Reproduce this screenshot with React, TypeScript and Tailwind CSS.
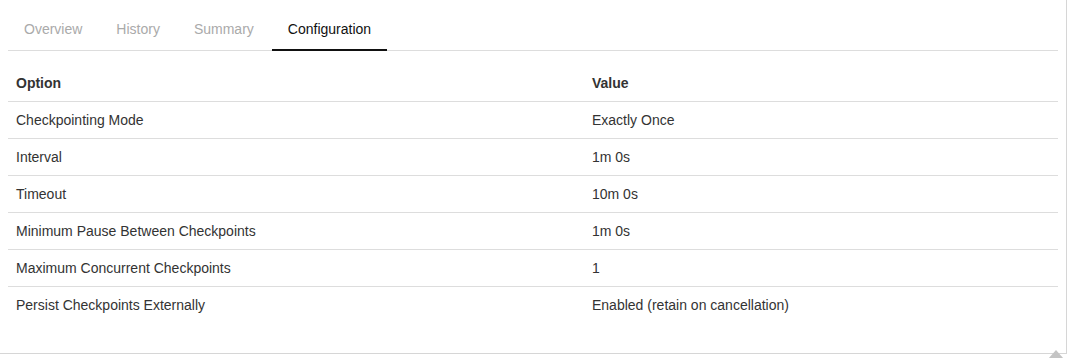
import React from 'react';

const tabs = ['Overview', 'History', 'Summary', 'Configuration'];

const rows: [string, string][] = [
  ['Checkpointing Mode', 'Exactly Once'],
  ['Interval', '1m 0s'],
  ['Timeout', '10m 0s'],
  ['Minimum Pause Between Checkpoints', '1m 0s'],
  ['Maximum Concurrent Checkpoints', '1'],
  ['Persist Checkpoints Externally', 'Enabled (retain on cancellation)'],
];

const App = () => {
  const active = 'Configuration';

  return (
    <div className="relative w-[1072px] h-[358px] bg-white overflow-hidden font-['Liberation_Sans',Arial,sans-serif] text-[14px] leading-5 text-[#333]">
      <div className="w-[1067px] h-[354px] bg-white border-r border-b border-[#d6d6d6] px-2 pt-2">
        <ul className="flex gap-[2px] border-b border-[#dddddd]">
          {tabs.map((tab) => (
            <li
              key={tab}
              className={`px-4 pt-[11px] pb-[10px] -mb-px border-b-2 ${
                tab === active ? 'border-[#111] text-[#111]' : 'border-transparent text-[#aaaaaa]'
              }`}
            >
              {tab}
            </li>
          ))}
        </ul>

        <table className="mt-[14px] w-full border-collapse">
          <thead>
            <tr className="border-b border-[#dddddd]">
              <th className="w-[576px] p-2 text-left font-bold">Option</th>
              <th className="p-2 text-left font-bold">Value</th>
            </tr>
          </thead>
          <tbody>
            {rows.map(([option, value], i) => (
              <tr key={option} className={i < rows.length - 1 ? 'border-b border-[#dddddd]' : ''}>
                <td className="p-2">{option}</td>
                <td className="p-2">{value}</td>
              </tr>
            ))}
          </tbody>
        </table>
      </div>

      {/* back to top caret */}
      <svg className="absolute left-[1048px] top-[349px]" width="16" height="10" viewBox="0 0 16 10">
        <path d="M8 1 L15.5 9.5 L0.5 9.5 Z" fill="#c4c4c4" />
      </svg>
    </div>
  );
};

export default App;
